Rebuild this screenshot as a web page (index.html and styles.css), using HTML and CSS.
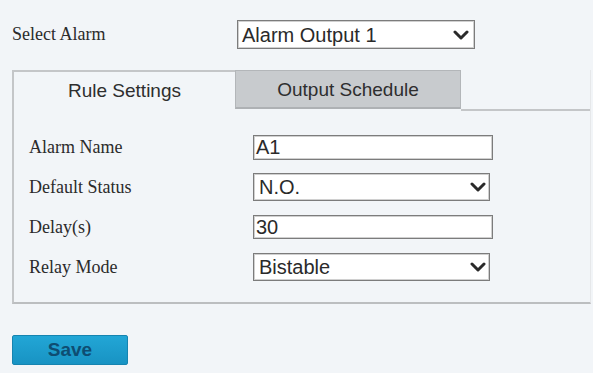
FILE: index.html
```html
<!DOCTYPE html>
<html>
<head>
<meta charset="utf-8">
<link rel="stylesheet" href="styles.css">
</head>
<body>
<div class="page">
  <div class="top-row">
    <span class="label top-label">Select Alarm</span>
    <div class="select select-top">
      <span class="value">Alarm Output 1</span>
      <svg class="chev" width="16" height="10" viewBox="0 0 16 10"><polyline points="2,2 8,8 14,2" fill="none" stroke="#2a2a2a" stroke-width="3" stroke-linecap="round" stroke-linejoin="round"/></svg>
    </div>
  </div>

  <div class="panel">
    <div class="tabs">
      <div class="tab tab-active">Rule Settings</div>
      <div class="tab tab-inactive">Output Schedule</div>
      <div class="tab-fill"></div>
    </div>
    <div class="rows">
      <div class="row">
        <span class="label">Alarm Name</span>
        <div class="input">A1</div>
      </div>
      <div class="row">
        <span class="label">Default Status</span>
        <div class="select select-row">
          <span class="value">N.O.</span>
          <svg class="chev" width="16" height="10" viewBox="0 0 16 10"><polyline points="2,2 8,8 14,2" fill="none" stroke="#2a2a2a" stroke-width="3" stroke-linecap="round" stroke-linejoin="round"/></svg>
        </div>
      </div>
      <div class="row">
        <span class="label">Delay(s)</span>
        <div class="input input-short">30</div>
      </div>
      <div class="row">
        <span class="label">Relay Mode</span>
        <div class="select select-row">
          <span class="value">Bistable</span>
          <svg class="chev" width="16" height="10" viewBox="0 0 16 10"><polyline points="2,2 8,8 14,2" fill="none" stroke="#2a2a2a" stroke-width="3" stroke-linecap="round" stroke-linejoin="round"/></svg>
        </div>
      </div>
    </div>
  </div>

  <button class="save">Save</button>
</div>
</body>
</html>
```

FILE: styles.css
```css
html, body {
  margin: 0;
  padding: 0;
  background: #f2f5f8;
}
.page {
  padding: 20px 2px 0 12px;
  width: 579px;
}
.label {
  font-family: "Liberation Serif", "Times New Roman", serif;
  font-size: 18px;
  color: #2b2b2b;
}
.top-row {
  display: flex;
  align-items: center;
  height: 29px;
}
.top-label {
  width: 225px;
  flex: none;
}
.select {
  box-sizing: border-box;
  display: flex;
  align-items: center;
  justify-content: space-between;
  background: #fff;
  border: 1px solid #7c7c7c;
  box-shadow: inset 0 0 0 1px #d0d0d0;
  font-family: "Liberation Sans", Arial, sans-serif;
  font-size: 20px;
  color: #2a2a2a;
}
.select-top {
  width: 238px;
  height: 29px;
  padding: 0 5px 0 4px;
}
.select-row {
  width: 237px;
  height: 28px;
  padding: 0 3px 0 5px;
}
.value {
  line-height: 1;
}
.chev {
  display: block;
  flex: none;
}
.panel {
  margin-top: 21px;
  border-left: 2px solid #c4c6c8;
  border-bottom: 2px solid #bcbec0;
  border-right: 1px solid #e6e8ea;
}
.tabs {
  display: flex;
  height: 40px;
}
.tab {
  box-sizing: border-box;
  display: flex;
  align-items: center;
  justify-content: center;
  font-family: "Liberation Sans", Arial, sans-serif;
  font-size: 19px;
  color: #2e2e2e;
}
.tab-active {
  width: 221px;
  border-top: 2px solid #c4c6c8;
}
.tab-inactive {
  width: 226px;
  height: 39px;
  padding-top: 2px;
  background: #c8cbce;
  border: 1px solid #b3b6b9;
  border-bottom: 2px solid #aeb1b4;
}
.tab-fill {
  flex: 1;
  height: 39px;
  border-bottom: 2px solid #c4c6c8;
}
.rows {
  padding: 17px 0 15px 15px;
}
.row {
  display: flex;
  align-items: center;
  height: 40px;
}
.row .label {
  width: 224px;
  flex: none;
}
.input {
  box-sizing: border-box;
  width: 240px;
  height: 25px;
  background: #fff;
  border: 1px solid #7c7c7c;
  box-shadow: inset 0 0 0 1px #d0d0d0;
  padding: 0 2px;
  display: flex;
  align-items: center;
  font-family: "Liberation Sans", Arial, sans-serif;
  font-size: 20px;
  color: #2a2a2a;
}
.input-short {
  height: 24px;
}
.save {
  display: block;
  margin-top: 31px;
  width: 116px;
  height: 30px;
  border: 1px solid #1684b0;
  border-radius: 2px;
  background: linear-gradient(#22a6d6, #1893c3);
  font-family: "Liberation Sans", Arial, sans-serif;
  font-weight: bold;
  font-size: 19px;
  color: #0e4d72;
  padding: 0;
}
```
